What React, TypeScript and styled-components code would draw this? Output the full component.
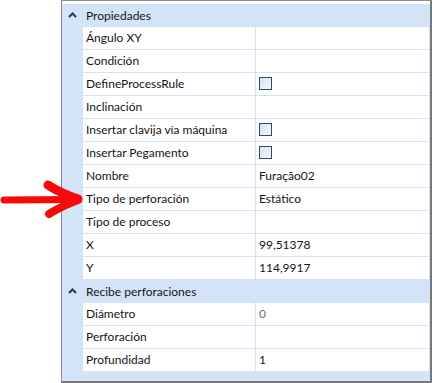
import styled, { createGlobalStyle } from 'styled-components';

const GlobalStyle = createGlobalStyle`
  html, body {
    margin: 0;
    padding: 0;
    background: #ffffff;
  }
  body {
    font-family: Lato, "Noto Sans", sans-serif;
    font-size: 12px;
    color: #141414;
  }
`;

const GRID_BLUE = '#d4e4f8';
const LINE_BLUE = '#d3e2f5';

const Page = styled.div`
  position: relative;
  width: 432px;
  height: 383px;
  display: flex;
  padding-left: 61px;
  box-sizing: border-box;
`;

const Panel = styled.div`
  flex: 1;
  display: flex;
  flex-direction: column;
  box-sizing: border-box;
  border-left: 1px solid #8c8c8c;
  border-top: 1px solid #8c8c8c;
  border-right: 2px solid #787878;
  border-bottom: 2px solid #787878;
  background: #ffffff;
  padding-top: 3px;
`;

const Grid = styled.div`
  flex: 1;
  display: flex;
  flex-direction: column;
  background: ${GRID_BLUE};
`;

const SectionHeader = styled.div`
  display: flex;
  align-items: center;
  height: 23px;
  padding-bottom: 1px;
  box-sizing: border-box;
  background: ${GRID_BLUE};
`;

const Gutter = styled.div`
  width: 21px;
  flex: none;
  display: flex;
  align-items: center;
  justify-content: center;
`;

const SectionTitle = styled.div`
  padding-left: 3px;
  white-space: nowrap;
`;

const Row = styled.div`
  display: flex;
  height: 23px;
`;

const Cell = styled.div<{ $muted?: boolean }>`
  box-sizing: border-box;
  height: 23px;
  display: flex;
  align-items: center;
  padding: 0 0 1px 3px;
  background: #ffffff;
  border-bottom: 1px solid ${LINE_BLUE};
  border-right: 1px solid ${LINE_BLUE};
  white-space: nowrap;
  overflow: hidden;
  color: ${({ $muted }) => ($muted ? '#6d6d6d' : '#141414')};
`;

const LabelCell = styled(Cell)`
  width: 173px;
  flex: none;
`;

const ValueCell = styled(Cell)`
  flex: 1;
`;

const CheckBox = styled.span`
  display: inline-block;
  box-sizing: border-box;
  width: 13px;
  height: 13px;
  border: 1px solid #1f4f82;
  background: linear-gradient(135deg, #dcdfe9 0%, #eceef4 55%, #f7f8fb 100%);
`;

const ArrowMark = styled.svg`
  position: absolute;
  left: 0;
  top: 180px;
  pointer-events: none;
`;

const Chevron = () => (
  <svg width="9" height="6" viewBox="0 0 9 6">
    <path d="M1 5 L4.5 1.5 L8 5" fill="none" stroke="#1b3a66" strokeWidth="2" />
  </svg>
);

type Prop = {
  label: string;
  value?: string;
  check?: boolean;
  muted?: boolean;
};

const propiedades: Prop[] = [
  { label: 'Ángulo XY' },
  { label: 'Condición' },
  { label: 'DefineProcessRule', check: true },
  { label: 'Inclinación' },
  { label: 'Insertar clavija vía máquina', check: true },
  { label: 'Insertar Pegamento', check: true },
  { label: 'Nombre', value: 'Furação02' },
  { label: 'Tipo de perforación', value: 'Estático' },
  { label: 'Tipo de proceso' },
  { label: 'X', value: '99,51378' },
  { label: 'Y', value: '114,9917' },
];

const perforaciones: Prop[] = [
  { label: 'Diámetro', value: '0', muted: true },
  { label: 'Perforación' },
  { label: 'Profundidad', value: '1' },
];

const Section = ({ title, items }: { title: string; items: Prop[] }) => (
  <>
    <SectionHeader>
      <Gutter>
        <Chevron />
      </Gutter>
      <SectionTitle>{title}</SectionTitle>
    </SectionHeader>
    {items.map((p) => (
      <Row key={p.label}>
        <Gutter />
        <LabelCell>{p.label}</LabelCell>
        <ValueCell $muted={p.muted}>
          {p.check ? <CheckBox /> : p.value}
        </ValueCell>
      </Row>
    ))}
  </>
);

export default function App() {
  return (
    <>
      <GlobalStyle />
      <Page>
        <Panel>
          <Grid>
            <Section title="Propiedades" items={propiedades} />
            <Section title="Recibe perforaciones" items={perforaciones} />
          </Grid>
        </Panel>
        <ArrowMark width="85" height="40" viewBox="0 0 85 40">
          <g fill="none" stroke="#f50a0a" strokeLinecap="round" strokeLinejoin="round">
            <path d="M4 20 L72 19.5" strokeWidth="7" />
            <path d="M48 5 Q60 13 78 19" strokeWidth="9" />
            <path d="M49 34 Q62 26 78 20" strokeWidth="8" />
          </g>
        </ArrowMark>
      </Page>
    </>
  );
}
